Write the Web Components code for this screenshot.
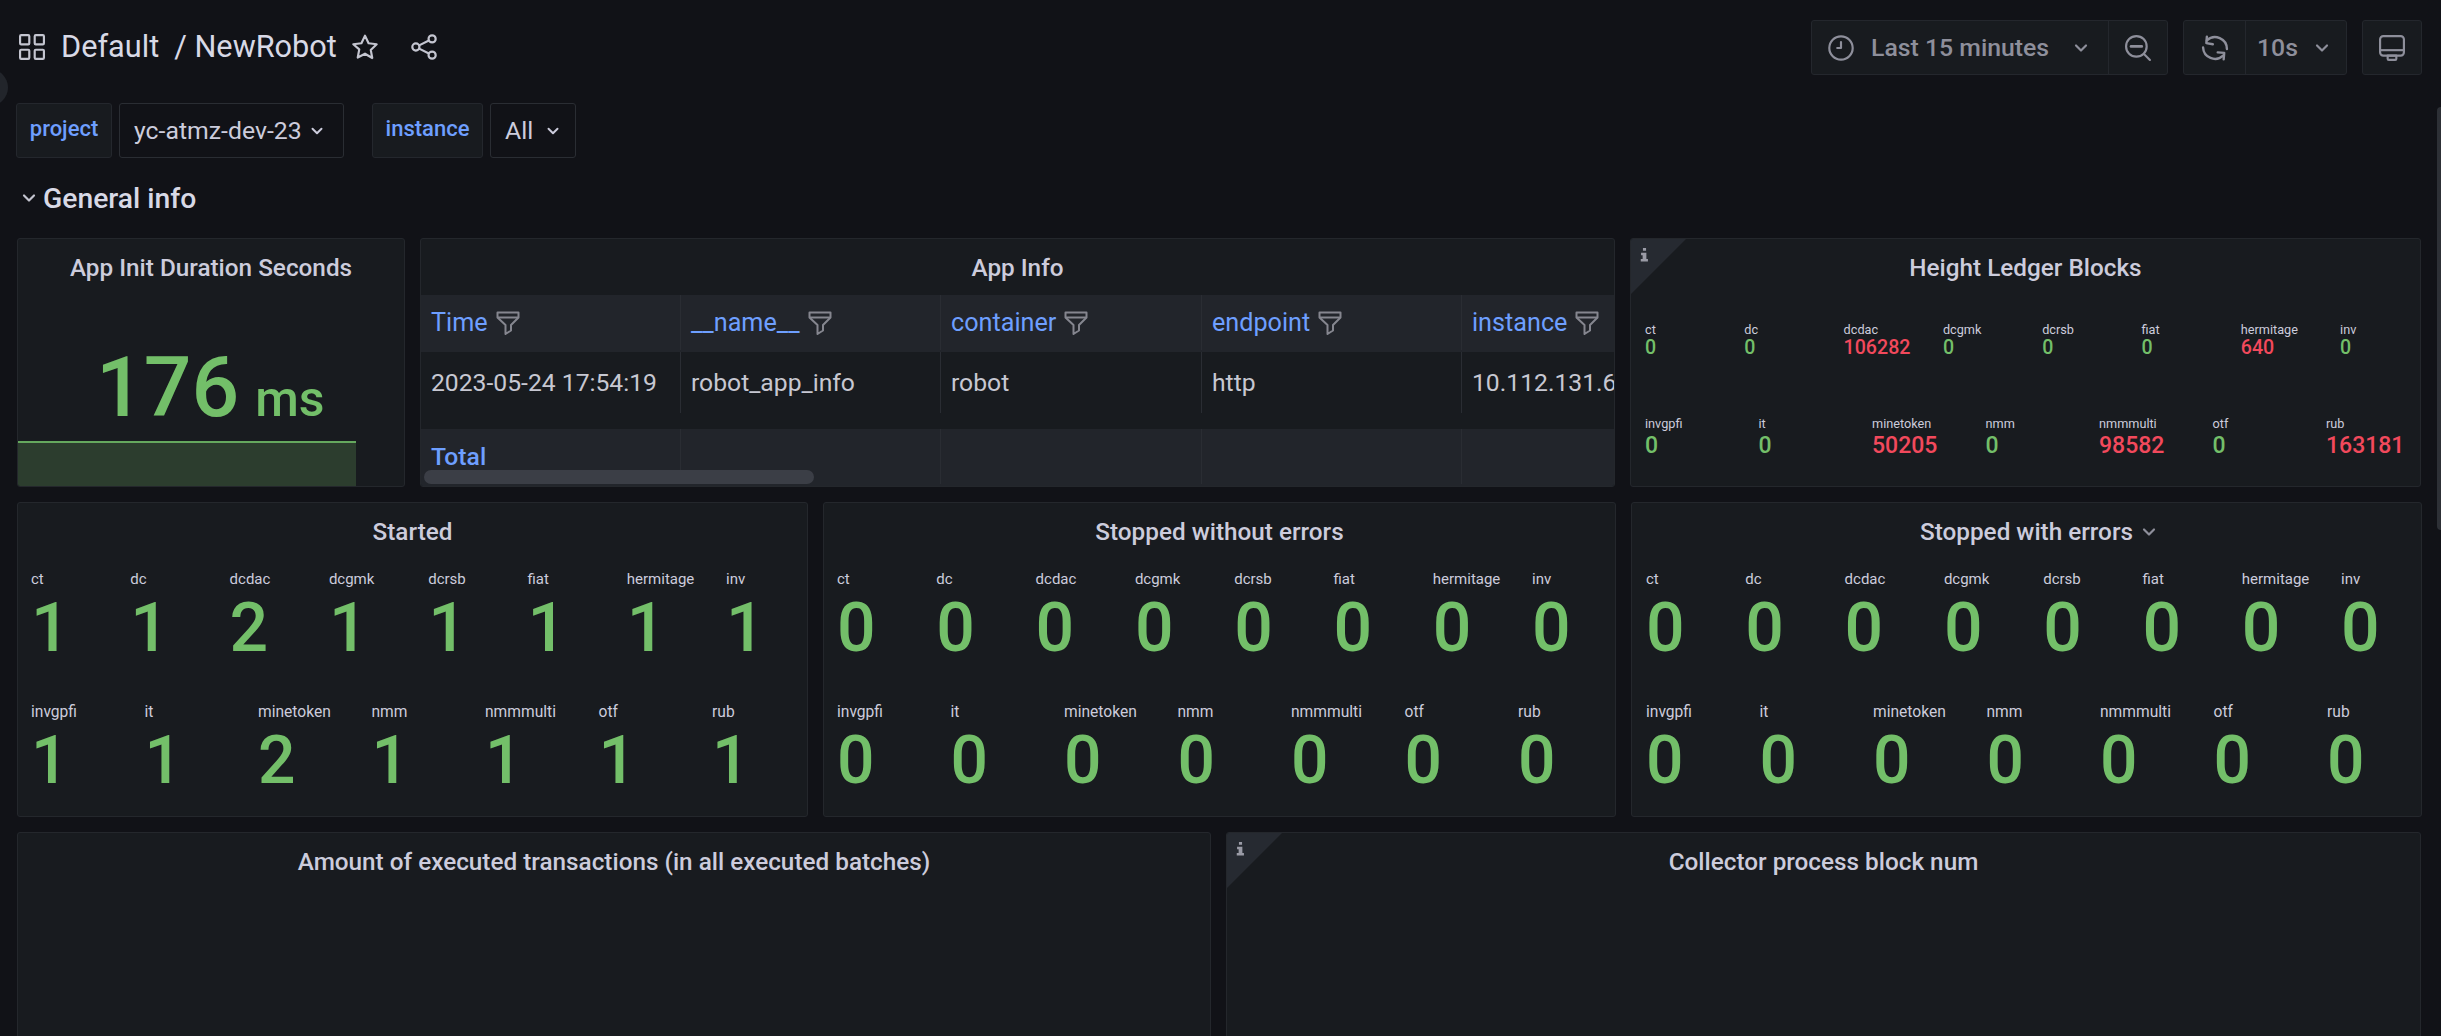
<!DOCTYPE html>
<html><head><meta charset="utf-8"><style>
html,body{margin:0;padding:0;background:#111217;overflow:hidden}
</style></head><body>
<gf-app>
  <gf-nav></gf-nav>
  <gf-vars></gf-vars>
  <gf-row-title>General info</gf-row-title>
  <gf-grid>
    <gf-panel title="App Init Duration Seconds" style="--w:388px"><gf-gauge></gf-gauge></gf-panel>
    <gf-panel title="App Info" style="--w:1195px"><gf-table></gf-table></gf-panel>
    <gf-panel title="Height Ledger Blocks" info style="--w:791px"><gf-stats mode="small" data="ct:0,dc:0,dcdac:106282,dcgmk:0,dcrsb:0,fiat:0,hermitage:640,inv:0|invgpfi:0,it:0,minetoken:50205,nmm:0,nmmmulti:98582,otf:0,rub:163181"></gf-stats></gf-panel>
  </gf-grid>
  <gf-grid>
    <gf-panel title="Started" style="--w:791px;--h:315px;--pad:13px"><gf-stats data="ct:1,dc:1,dcdac:2,dcgmk:1,dcrsb:1,fiat:1,hermitage:1,inv:1|invgpfi:1,it:1,minetoken:2,nmm:1,nmmmulti:1,otf:1,rub:1"></gf-stats></gf-panel>
    <gf-panel title="Stopped without errors" style="--w:793px;--h:315px;--pad:13px"><gf-stats data="ct:0,dc:0,dcdac:0,dcgmk:0,dcrsb:0,fiat:0,hermitage:0,inv:0|invgpfi:0,it:0,minetoken:0,nmm:0,nmmmulti:0,otf:0,rub:0"></gf-stats></gf-panel>
    <gf-panel title="Stopped with errors" chevron style="--w:791px;--h:315px"><gf-stats data="ct:0,dc:0,dcdac:0,dcgmk:0,dcrsb:0,fiat:0,hermitage:0,inv:0|invgpfi:0,it:0,minetoken:0,nmm:0,nmmmulti:0,otf:0,rub:0"></gf-stats></gf-panel>
  </gf-grid>
  <gf-grid>
    <gf-panel title="Amount of executed transactions (in all executed batches)" style="--w:1194px;--h:300px"></gf-panel>
    <gf-panel title="Collector process block num" info style="--w:1195px;--h:300px"></gf-panel>
  </gf-grid>
  <gf-overlays></gf-overlays>
</gf-app>
<script>
const ICONS={
apps:'<g fill="none" stroke="currentColor" stroke-width="2"><rect x="1" y="1" width="8.5" height="8.5" rx="1"/><rect x="14.5" y="1" width="8.5" height="8.5" rx="1"/><rect x="1" y="14.5" width="8.5" height="8.5" rx="1"/><rect x="14.5" y="14.5" width="8.5" height="8.5" rx="1"/></g>',
star:'<path fill="none" stroke="currentColor" stroke-width="2" stroke-linejoin="round" d="M12 1.5l3.3 7 7.5 1-5.5 5.2 1.4 7.5L12 18.2l-6.7 3.5 1.4-7.5L1.2 9.5l7.5-1z"/>',
share:'<g fill="none" stroke="currentColor" stroke-width="2"><circle cx="19.5" cy="4.5" r="3.3"/><circle cx="4.5" cy="12" r="3.3"/><circle cx="19.5" cy="19.5" r="3.3"/><path d="M7.5 10.5l9-4.5M7.5 13.5l9 4.5"/></g>',
clock:'<g fill="none" stroke="currentColor" stroke-width="2" stroke-linecap="round" stroke-linejoin="round"><circle cx="12" cy="12" r="10.8"/><path d="M12 6.5V12H8.5"/></g>',
zoomout:'<g fill="none" stroke="currentColor" stroke-width="2" stroke-linecap="round"><circle cx="10.5" cy="10.5" r="9.5"/><path d="M5.5 10.5h10" stroke-width="2.4"/><path d="M17.5 17.5L23 23"/></g>',
sync:'<g fill="none" stroke="currentColor" stroke-width="2.2" stroke-linecap="round" stroke-linejoin="round"><path d="M23 13A11 11 0 0 0 4.5 5M1 11.5A11 11 0 0 0 19.5 19"/><path d="M4.5 1.5L4 7.5l6 1M20 22.5l.5-6-6-.5"/></g>',
monitor:'<g fill="none" stroke="currentColor" stroke-width="2" stroke-linejoin="round"><rect x="1" y="1" width="22" height="18" rx="3"/><path d="M1 14h22"/><path d="M8 19h8v3a1 1 0 0 1-1 1H9a1 1 0 0 1-1-1z"/></g>',
chev:'<path fill="none" stroke="currentColor" stroke-width="2.6" stroke-linecap="round" stroke-linejoin="round" d="M6 9l6 6 6-6"/>',
filter:'<g fill="none" stroke="currentColor" stroke-width="2" stroke-linejoin="round"><path d="M1.5 1.5h21v5L15 14v5.5L9.5 23V14L1.5 6.5z"/><path d="M1.5 6.5h21"/></g>',
info:'<path fill="currentColor" d="M9.5 1.5h5v4.5h-5zM6.5 9h8.5v10h2.5v4h-11.5v-4h3V13h-2.5z"/>'
};
class GfIcon extends HTMLElement{constructor(){super();this.attachShadow({mode:'open'})}
connectedCallback(){const s=this.getAttribute('size')||26;this.shadowRoot.innerHTML=`<style>:host{display:inline-flex;flex:none;width:${s}px;height:${s}px;line-height:0}svg{width:100%;height:100%;overflow:visible}</style><svg viewBox="0 0 24 24">${ICONS[this.getAttribute('name')]}</svg>`}}
customElements.define('gf-icon',GfIcon);
const base=`:host{font-family:Roboto,"Liberation Sans",sans-serif;box-sizing:border-box}*{box-sizing:border-box}`;
class El extends HTMLElement{constructor(){super();this.attachShadow({mode:'open'})}connectedCallback(){this.shadowRoot.innerHTML=`<style>${base}${this.css||''}</style>${this.html||''}`}}
customElements.define('gf-app',class extends El{get css(){return `:host{display:block;position:relative;width:2441px;height:1036px;overflow:hidden;background:#111217;color:#ccccdc;padding-top:20px}`}get html(){return '<slot></slot>'}});
customElements.define('gf-nav',class extends El{get css(){return `
:host{display:flex;align-items:center;height:55px;padding:0 19px}
.t{font-size:30.7px;color:#d8d9e6;line-height:52px;white-space:pre}
.l{display:flex;align-items:center;flex:1;margin-top:-2px}
.l gf-icon{color:#c4c5d0}
.box{display:flex;align-items:center;height:55px;background:#181b1f;border:1px solid #24272d;border-radius:3px;color:#8e8f9b;font-size:24.8px;font-weight:500}
.cell{display:flex;align-items:center;height:100%}
.cell+.cell{border-left:1px solid #24272d}
`}get html(){return `<div class="l">
<gf-icon name="apps"></gf-icon><span class="t" style="margin-left:16px">Default</span><span class="t" style="margin-left:15px">/ NewRobot</span>
<gf-icon name="star" style="margin-left:15px"></gf-icon><gf-icon name="share" style="margin-left:33px"></gf-icon></div>
<div class="box" style="width:357px"><div class="cell" style="width:296px;padding-left:16px"><gf-icon name="clock"></gf-icon><span style="margin-left:17px">Last 15 minutes</span><gf-icon name="chev" size="20" style="margin-left:22px"></gf-icon></div><div class="cell" style="flex:1;justify-content:center"><gf-icon name="zoomout"></gf-icon></div></div>
<div class="box" style="width:164px;margin-left:15px"><div class="cell" style="width:61px;justify-content:center"><gf-icon name="sync"></gf-icon></div><div class="cell" style="flex:1;padding-left:11px"><span>10s</span><gf-icon name="chev" size="20" style="margin-left:14px"></gf-icon></div></div>
<div class="box" style="width:60px;margin-left:15px;justify-content:center"><gf-icon name="monitor"></gf-icon></div>`}});
customElements.define('gf-vars',class extends El{get css(){return `
:host{display:flex;height:55px;margin-top:28px;padding-left:16px;font-size:24.8px}
.lb{display:flex;align-items:center;justify-content:center;height:100%;background:#181b1f;border:1px solid #24272d;border-radius:3px;color:#6e9fff;font-weight:500;font-size:22px;padding-bottom:4px}
.sel{display:flex;align-items:center;height:100%;background:#111217;border:1px solid #2a2d33;border-radius:3px;color:#ccccdc;margin-left:7px;padding-left:14px}
`}get html(){return `<div class="lb" style="width:96px">project</div><div class="sel" style="width:225px"><span>yc-atmz-dev-23</span><gf-icon name="chev" size="18" style="margin-left:6px"></gf-icon></div>
<div class="lb" style="width:111px;margin-left:28px">instance</div><div class="sel" style="width:86px"><span>All</span><gf-icon name="chev" size="18" style="margin-left:11px"></gf-icon></div>`}});
customElements.define('gf-row-title',class extends El{get css(){return `:host{display:flex;align-items:center;height:36px;margin-top:22px;padding-left:19px;font-size:28.3px;font-weight:500;color:#d8d9e6}gf-icon{margin-right:4px;color:#c4c5d0}`}get html(){return `<gf-icon name="chev" size="20"></gf-icon><slot></slot>`}});
customElements.define('gf-grid',class extends El{get css(){return `:host{display:flex;gap:15px;margin:0 0 15px 17px;}:host(:first-of-type){margin-top:22px}`}get html(){return '<slot></slot>'}});
customElements.define('gf-panel',class extends El{get css(){return `
:host{display:block;flex:none;width:var(--w);height:var(--h,249px);background:#181b1f;border:1px solid #24272c;border-radius:3px;position:relative;overflow:hidden}
.ti{height:56px;display:flex;align-items:center;justify-content:center;font-size:24.3px;font-weight:500;color:#ccccdc;white-space:nowrap}
.ti span{position:relative}
.tri{position:absolute;left:0;top:0;width:0;height:0;border-top:55px solid #262a31;border-right:55px solid transparent}
.i{position:absolute;left:6px;top:8px;color:#9a9ba6}
.c{position:absolute;left:100%;top:5px;margin-left:6px;color:#8e8f9b}
`}get html(){const info=this.hasAttribute('info');return `${info?'<div class="tri"></div><gf-icon class="i" name="info" size="15"></gf-icon>':''}<div class="ti"><span>${this.getAttribute('title')}${this.hasAttribute('chevron')?'<gf-icon class="c" name="chev" size="20"></gf-icon>':''}</span></div><slot></slot>`}});
customElements.define('gf-gauge',class extends El{get css(){return `
:host{display:block;position:relative;height:191px}
.v{position:absolute;left:78px;top:43px;color:#73bf69;font-weight:500;font-size:84px;line-height:100px;white-space:nowrap}
.u{font-size:50px;margin-left:16px}
.sp{position:absolute;left:0;top:146px;width:338px;height:45px;background:#2c3d2e;border-top:2px solid #65a85e}
`}get html(){return `<div class="sp"></div><div class="v">176<span class="u">ms</span></div>`}});
customElements.define('gf-table',class extends El{get css(){return `
:host{display:block;position:relative;height:191px;overflow:hidden;font-size:24.7px}
.r{display:grid;grid-template-columns:260px 260px 261px 260px 260px;}
.h{height:57px;background:#22252b;padding-bottom:2px}
.d{height:61px}
.f{height:57px;background:#22252b;margin-top:16px;padding-bottom:2px}
.cell{display:flex;align-items:center;padding-left:10px;border-right:1px solid #2a2d33;white-space:nowrap;color:#c7c8d2}
.r .cell:last-child{border-right:0}
.h .cell,.f .cell{color:#6e9fff;font-weight:400;font-size:25.2px}
gf-icon{color:#85868f;margin-left:8px}
.th{position:absolute;left:3px;top:175px;width:390px;height:14px;border-radius:7px;background:#3b3e46}
`}get html(){const h=['Time','__name__','container','endpoint','instance'],d=['2023-05-24 17:54:19','robot_app_info','robot','http','10.112.131.6'];
return `<div class="r h">${h.map(x=>`<div class="cell"><span>${x}</span><gf-icon name="filter" size="24"></gf-icon></div>`).join('')}</div>
<div class="r d">${d.map(x=>`<div class="cell"><span>${x}</span></div>`).join('')}</div>
<div class="r f"><div class="cell" style="font-weight:500;font-size:24.7px"><span>Total</span></div><div class="cell"></div><div class="cell"></div><div class="cell"></div><div class="cell"></div></div><div class="th"></div>`}});
customElements.define('gf-stats',class extends El{get css(){const sm=this.getAttribute('mode')==='small';return `
:host{display:block;padding-left:var(--pad,14px)}
.row{display:grid;white-space:nowrap}
.row.a{grid-template-columns:repeat(8,99.3px);margin-top:${sm?26:11}px}
.row.b{grid-template-columns:repeat(7,113.5px);margin-top:${sm?58:41}px}
.lb{color:#ccccdc;font-size:${sm?12.7:15}px;line-height:18px}
.b .lb{font-size:${sm?12.7:15.6}px}
.v{font-weight:500;margin-top:${sm?0:6}px}
.a .v{font-size:${sm?19.6:68}px;line-height:${sm?18:68}px}.b .v{font-size:${sm?23:66}px;line-height:${sm?24:68}px;margin-top:${sm?1:6}px}
.g{color:#73bf69}.r{color:#f2495c}
`}get html(){return this.getAttribute('data').split('|').map((row,i)=>`<div class="row ${i?'b':'a'}">${row.split(',').map(p=>{const[a,b]=p.split(':');return `<div><div class="lb">${a}</div><div class="v ${+b>0&&this.getAttribute('mode')==='small'?'r':'g'}">${b}</div></div>`}).join('')}</div>`).join('')}});
customElements.define('gf-overlays',class extends El{get css(){return `
.sb{position:absolute;left:2437px;top:107px;width:8px;height:423px;border-radius:4px;background:#2d3036}
.c{position:absolute;left:-29px;top:69px;width:37px;height:37px;border-radius:50%;background:#22252b}`}get html(){return '<div class="sb"></div><div class="c"></div>'}});
</script>
</body></html>
